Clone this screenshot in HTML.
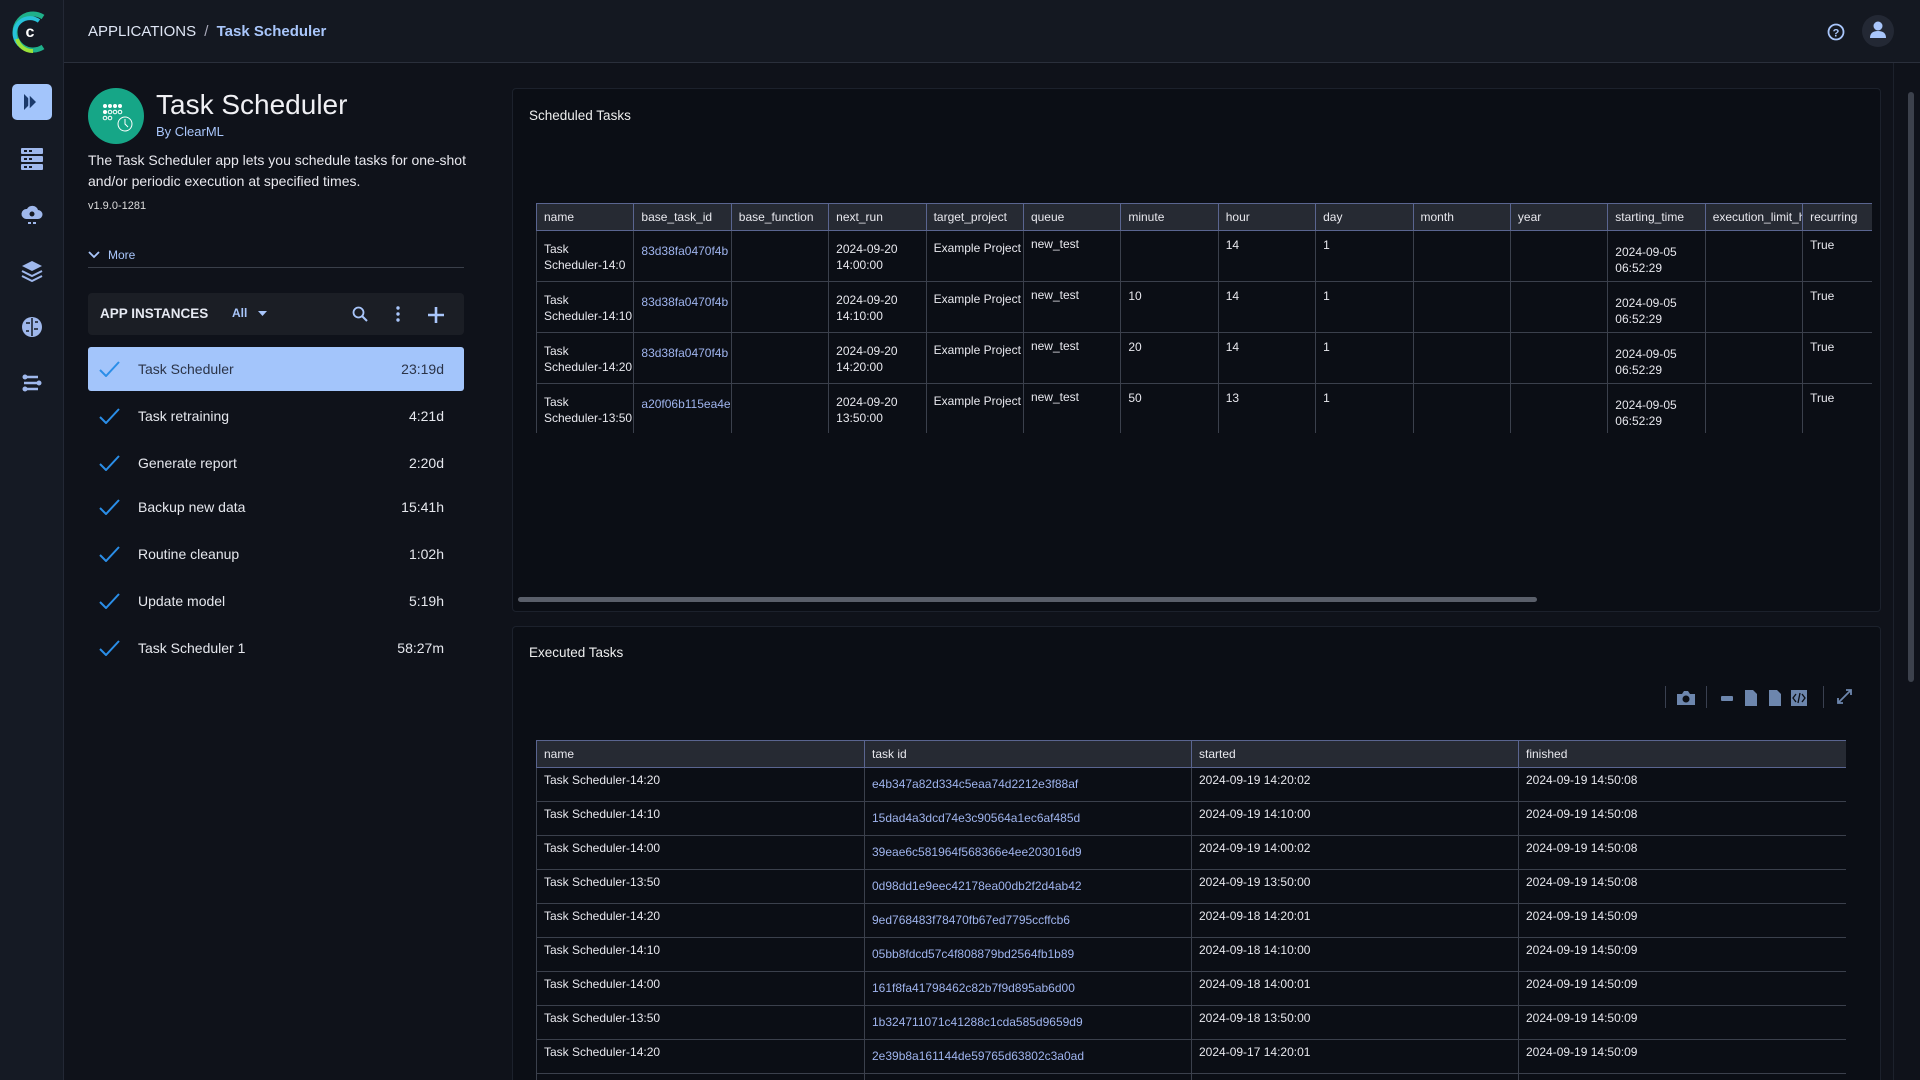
<!DOCTYPE html>
<html style="width:1920px;height:1080px;overflow:hidden"><head><meta charset="utf-8"><style>
*{box-sizing:border-box;margin:0;padding:0}
body{width:1920px;height:1080px;overflow:hidden;background:#0f121a;font-family:"Liberation Sans",sans-serif;color:#e6e8ee;position:relative}
.abs{position:absolute}
#side{left:0;top:0;width:64px;height:1080px;background:#151a24;border-right:1px solid #232835}
#head{left:64px;top:0;width:1856px;height:63px;background:#141821;border-bottom:1px solid #2a2f3b}
.card{background:#0b0e15;border:1px solid #1c212c;border-radius:4px}
table{border-collapse:collapse;font-family:"Liberation Sans Narrow","Liberation Sans",sans-serif;font-size:12px;color:#e8e8ee;table-layout:fixed}
td,th{border:1px solid #3b404c;text-align:left;vertical-align:top;padding:5px 7px;font-weight:normal;overflow:hidden;white-space:nowrap}
th{background:#262a33;border-color:#5a6590;height:27px;padding-top:6px}
.lk{color:#9fb4ee}
.item{left:88px;width:376px;height:44px;font-size:14px}
.item .n{position:absolute;left:50px;top:14px}
.item .t{position:absolute;right:20px;top:14px}
.item svg{position:absolute;left:11px;top:14px}
</style></head><body>
<div id="side" class="abs">
<svg class="abs" style="left:9px;top:9px" width="42" height="46" viewBox="0 0 42 46"><path d="M34 8 A18 18 0 1 0 34 38" fill="none" stroke="#1fb08a" stroke-width="5"/><path d="M30 12 A14 14 0 0 0 12 37" fill="none" stroke="#27c2d9" stroke-width="4"/><path d="M8 30 A16 16 0 0 0 24 42" fill="none" stroke="#9be33a" stroke-width="4"/><text x="21" y="28" fill="#fff" font-size="16" font-weight="bold" font-family="Liberation Sans" text-anchor="middle">c</text></svg>
<div class="abs" style="left:12px;top:84px;width:40px;height:36px;background:#a3c5fb;border-radius:5px"></div>
<svg class="abs" style="left:22px;top:92px" width="20" height="20" viewBox="0 0 20 20"><path d="M2 2 L10 10 L2 18Z" fill="#1b3a6a"/><path d="M7 2 L15 10 L7 18Z" fill="#1b3a6a" stroke="#a3c5fb" stroke-width="1.5"/></svg>
<svg class="abs" style="left:21px;top:148px" width="22" height="22"><g fill="#9fb8ec"><rect x="0" y="0" width="22" height="6" rx="1"/><rect x="0" y="8" width="22" height="6" rx="1"/><rect x="0" y="16" width="22" height="6" rx="1"/></g><g fill="#151a24"><rect x="3" y="2" width="3" height="2"/><rect x="8" y="2" width="3" height="2"/><rect x="3" y="10" width="3" height="2"/><rect x="8" y="10" width="3" height="2"/><rect x="3" y="18" width="3" height="2"/><rect x="8" y="18" width="3" height="2"/></g></svg>
<svg class="abs" style="left:21px;top:204px" width="22" height="22"><path d="M5 15 A5 5 0 0 1 6 5 A6 6 0 0 1 17 6 A4.5 4.5 0 0 1 17 15Z" fill="#9fb8ec"/><circle cx="11" cy="10" r="2.5" fill="#151a24"/><path d="M7 19h3M12 19h3" stroke="#9fb8ec" stroke-width="2"/></svg>
<svg class="abs" style="left:21px;top:260px" width="22" height="22"><path d="M11 1 L21 6 L11 11 L1 6Z" fill="#9fb8ec"/><path d="M1 11 L11 16 L21 11 M1 16 L11 21 L21 16" fill="none" stroke="#9fb8ec" stroke-width="2"/></svg>
<svg class="abs" style="left:21px;top:316px" width="22" height="22"><circle cx="11" cy="11" r="10" fill="#9fb8ec"/><path d="M11 2v18M5 7h4M13 13h4M5 15h3M14 6h3" stroke="#151a24" stroke-width="1.5"/></svg>
<svg class="abs" style="left:21px;top:372px" width="22" height="22"><path d="M3 5h14M3 11h16M3 17h14" stroke="#9fb8ec" stroke-width="2.5" fill="none"/><circle cx="4" cy="5" r="2.5" fill="#9fb8ec"/><circle cx="18" cy="11" r="2.5" fill="#9fb8ec"/><circle cx="4" cy="17" r="2.5" fill="#9fb8ec"/></svg>
</div>
<div id="head" class="abs">
<div class="abs" style="left:24px;top:23px;font-size:15px;color:#dfe6f5">APPLICATIONS <span style="color:#aab;margin:0 4px">/</span> <span style="color:#a9c6fb;font-weight:bold">Task Scheduler</span></div>
<svg class="abs" style="left:1763px;top:23px" width="18" height="18"><circle cx="9" cy="9" r="7.5" fill="none" stroke="#a9c6fb" stroke-width="1.8"/><text x="9" y="13.5" font-size="11" font-weight="bold" fill="#a9c6fb" text-anchor="middle" font-family="Liberation Sans">?</text></svg>
<div class="abs" style="left:1798px;top:15px;width:32px;height:32px;border-radius:50%;background:#232834"></div>
<svg class="abs" style="left:1804px;top:20px" width="20" height="20"><circle cx="10" cy="6" r="4.5" fill="#a9c6fb"/><path d="M2 18 Q2 11 10 11 Q18 11 18 18Z" fill="#a9c6fb"/></svg>
</div>
<div class="abs" style="left:88px;top:88px;width:56px;height:56px;border-radius:50%;background:#16a687"></div>
<svg class="abs" style="left:100px;top:100px" width="36" height="36"><g fill="#fff"><circle cx="5" cy="6" r="2"/><circle cx="10" cy="6" r="2"/><circle cx="15" cy="6" r="2"/><circle cx="20" cy="6" r="2"/><circle cx="5" cy="12" r="2"/></g><g fill="none" stroke="#fff" stroke-width="1"><circle cx="10" cy="12" r="1.8"/><circle cx="15" cy="12" r="1.8"/><circle cx="20" cy="12" r="1.8"/><circle cx="5" cy="18" r="1.8"/><circle cx="10" cy="18" r="1.8"/><circle cx="25" cy="24" r="7"/><path d="M25 19v5l3 3"/></g></svg>
<div class="abs" style="left:156px;top:89px;font-size:28px;color:#f0f0f4">Task Scheduler</div>
<div class="abs" style="left:156px;top:124px;font-size:13px;color:#a9c6fb">By ClearML</div>
<div class="abs" style="left:88px;top:150px;font-size:14px;line-height:21px;color:#e8e8ee;width:390px">The Task Scheduler app lets you schedule tasks for one-shot and/or periodic execution at specified times.</div>
<div class="abs" style="left:88px;top:200px;font-size:11px;color:#ddd">v1.9.0-1281</div>
<svg class="abs" style="left:88px;top:250px" width="12" height="10"><path d="M1 2l5 5 5-5" stroke="#a9c6fb" stroke-width="1.8" fill="none"/></svg>
<div class="abs" style="left:108px;top:248px;font-size:12px;color:#a9c6fb">More</div>
<div class="abs" style="left:88px;top:267px;width:376px;height:1px;background:#3a3f4a"></div>
<div class="abs" style="left:88px;top:293px;width:376px;height:42px;background:#1b1e25;border-radius:4px"></div>
<div class="abs" style="left:100px;top:306px;font-size:13.5px;font-weight:bold;color:#e6e9f2">APP INSTANCES</div>
<div class="abs" style="left:232px;top:306px;font-size:12px;font-weight:bold;color:#a9c6fb">All</div>
<svg class="abs" style="left:258px;top:311px" width="9" height="5"><path d="M0 0h9L4.5 5Z" fill="#a9c6fb"/></svg>
<svg class="abs" style="left:352px;top:306px" width="16" height="16"><circle cx="6.5" cy="6.5" r="5" fill="none" stroke="#a9c6fb" stroke-width="1.8"/><path d="M10 10l5 5" stroke="#a9c6fb" stroke-width="2"/></svg>
<svg class="abs" style="left:396px;top:306px" width="4" height="16"><g fill="#a9c6fb"><circle cx="2" cy="2" r="1.7"/><circle cx="2" cy="8" r="1.7"/><circle cx="2" cy="14" r="1.7"/></g></svg>
<svg class="abs" style="left:428px;top:307px" width="16" height="16"><path d="M8 0v16M0 8h16" stroke="#a9c6fb" stroke-width="2.6"/></svg>
<div class="abs item" style="top:347px;background:#a3c5fb;border-radius:3px;color:#2b3448"><svg width="22" height="16"><path d="M1 9l6 6 L20 1" stroke="#2a8ee8" stroke-width="2" fill="none"/></svg><span class="n">Task Scheduler</span><span class="t">23:19d</span></div>
<div class="abs item" style="top:394px"><svg width="22" height="16"><path d="M1 9l6 6 L20 1" stroke="#2a8ee8" stroke-width="2" fill="none"/></svg><span class="n">Task retraining</span><span class="t">4:21d</span></div>
<div class="abs item" style="top:441px"><svg width="22" height="16"><path d="M1 9l6 6 L20 1" stroke="#2a8ee8" stroke-width="2" fill="none"/></svg><span class="n">Generate report</span><span class="t">2:20d</span></div>
<div class="abs item" style="top:485px"><svg width="22" height="16"><path d="M1 9l6 6 L20 1" stroke="#2a8ee8" stroke-width="2" fill="none"/></svg><span class="n">Backup new data</span><span class="t">15:41h</span></div>
<div class="abs item" style="top:532px"><svg width="22" height="16"><path d="M1 9l6 6 L20 1" stroke="#2a8ee8" stroke-width="2" fill="none"/></svg><span class="n">Routine cleanup</span><span class="t">1:02h</span></div>
<div class="abs item" style="top:579px"><svg width="22" height="16"><path d="M1 9l6 6 L20 1" stroke="#2a8ee8" stroke-width="2" fill="none"/></svg><span class="n">Update model</span><span class="t">5:19h</span></div>
<div class="abs item" style="top:626px"><svg width="22" height="16"><path d="M1 9l6 6 L20 1" stroke="#2a8ee8" stroke-width="2" fill="none"/></svg><span class="n">Task Scheduler 1</span><span class="t">58:27m</span></div>
<div class="abs card" style="left:512px;top:88px;width:1369px;height:524px"></div>
<div class="abs" style="left:529px;top:108px;font-size:13.5px;color:#eee">Scheduled Tasks</div>
<div class="abs" style="left:536px;top:203px;width:1336px;height:230px;overflow:hidden">
<table style="width:1390px">
<colgroup><col span="14" style="width:97.4px"><col style="width:26px"></colgroup>
<tr><th>name</th><th>base_task_id</th><th>base_function</th><th>next_run</th><th>target_project</th><th>queue</th><th>minute</th><th>hour</th><th>day</th><th>month</th><th>year</th><th>starting_time</th><th>execution_limit_hours</th><th>recurring</th><th></th></tr>
<tr style="height:50px"><td style="padding-top:10px;line-height:16px">Task<br>Scheduler-14:0</td><td class="lk" style="padding-top:13px">83d38fa0470f4b</td><td></td><td style="padding-top:10px;line-height:16px">2024-09-20<br>14:00:00</td><td style="padding-top:10px">Example Project</td><td style="padding-top:6px">new_test</td><td></td><td style="padding-top:7px">14</td><td style="padding-top:7px">1</td><td></td><td></td><td style="padding-top:13px;line-height:16px">2024-09-05<br>06:52:29</td><td></td><td style="padding-top:7px">True</td><td></td></tr>
<tr style="height:50px"><td style="padding-top:10px;line-height:16px">Task<br>Scheduler-14:10</td><td class="lk" style="padding-top:13px">83d38fa0470f4b</td><td></td><td style="padding-top:10px;line-height:16px">2024-09-20<br>14:10:00</td><td style="padding-top:10px">Example Project</td><td style="padding-top:6px">new_test</td><td style="padding-top:7px">10</td><td style="padding-top:7px">14</td><td style="padding-top:7px">1</td><td></td><td></td><td style="padding-top:13px;line-height:16px">2024-09-05<br>06:52:29</td><td></td><td style="padding-top:7px">True</td><td></td></tr>
<tr style="height:50px"><td style="padding-top:10px;line-height:16px">Task<br>Scheduler-14:20</td><td class="lk" style="padding-top:13px">83d38fa0470f4b</td><td></td><td style="padding-top:10px;line-height:16px">2024-09-20<br>14:20:00</td><td style="padding-top:10px">Example Project</td><td style="padding-top:6px">new_test</td><td style="padding-top:7px">20</td><td style="padding-top:7px">14</td><td style="padding-top:7px">1</td><td></td><td></td><td style="padding-top:13px;line-height:16px">2024-09-05<br>06:52:29</td><td></td><td style="padding-top:7px">True</td><td></td></tr>
<tr style="height:50px"><td style="padding-top:10px;line-height:16px">Task<br>Scheduler-13:50</td><td class="lk" style="padding-top:13px">a20f06b115ea4e</td><td></td><td style="padding-top:10px;line-height:16px">2024-09-20<br>13:50:00</td><td style="padding-top:10px">Example Project</td><td style="padding-top:6px">new_test</td><td style="padding-top:7px">50</td><td style="padding-top:7px">13</td><td style="padding-top:7px">1</td><td></td><td></td><td style="padding-top:13px;line-height:16px">2024-09-05<br>06:52:29</td><td></td><td style="padding-top:7px">True</td><td></td></tr>
</table></div>
<div class="abs" style="left:518px;top:597px;width:1019px;height:5px;border-radius:3px;background:#5a5f6a"></div>
<div class="abs card" style="left:512px;top:626px;width:1369px;height:454px;border-bottom:none;border-radius:4px 4px 0 0"></div>
<div class="abs" style="left:529px;top:645px;font-size:13.5px;color:#eee">Executed Tasks</div>
<div class="abs" style="left:1665px;top:686px;width:1px;height:22px;background:#3a4050"></div>
<div class="abs" style="left:1706px;top:686px;width:1px;height:22px;background:#3a4050"></div>
<div class="abs" style="left:1823px;top:686px;width:1px;height:22px;background:#3a4050"></div>
<svg class="abs" style="left:1677px;top:690px" width="18" height="15"><path d="M0 4h5l2-3h4l2 3h5v11H0Z" fill="#6d86ad"/><circle cx="9" cy="9" r="3.5" fill="#0b0e15"/></svg>
<div class="abs" style="left:1721px;top:696px;width:12px;height:5px;background:#6d86ad;border-radius:1px"></div>
<svg class="abs" style="left:1745px;top:690px" width="12" height="16"><path d="M0 0h8l4 4v12H0Z" fill="#6d86ad"/></svg>
<svg class="abs" style="left:1769px;top:690px" width="12" height="16"><path d="M0 0h8l4 4v12H0Z" fill="#6d86ad"/></svg>
<svg class="abs" style="left:1791px;top:690px" width="16" height="16"><rect width="16" height="16" fill="#6d86ad"/><path d="M5 4l-3 4 3 4M11 4l3 4-3 4M9 3l-2 10" stroke="#0b0e15" stroke-width="1.3" fill="none"/></svg>
<svg class="abs" style="left:1837px;top:689px" width="15" height="15"><path d="M1 14L14 1M9 1h5v5M1 9v5h5" stroke="#6d86ad" stroke-width="1.8" fill="none"/></svg>
<div class="abs" style="left:536px;top:740px;width:1310px;height:340px;overflow:hidden">
<table style="width:1310px">
<colgroup><col style="width:328px"><col style="width:327px"><col style="width:327px"><col style="width:328px"></colgroup>
<tr><th>name</th><th>task id</th><th>started</th><th>finished</th></tr>
<tr style="height:34px"><td>Task Scheduler-14:20</td><td class="lk" style="padding-top:9px">e4b347a82d334c5eaa74d2212e3f88af</td><td>2024-09-19 14:20:02</td><td>2024-09-19 14:50:08</td></tr>
<tr style="height:34px"><td>Task Scheduler-14:10</td><td class="lk" style="padding-top:9px">15dad4a3dcd74e3c90564a1ec6af485d</td><td>2024-09-19 14:10:00</td><td>2024-09-19 14:50:08</td></tr>
<tr style="height:34px"><td>Task Scheduler-14:00</td><td class="lk" style="padding-top:9px">39eae6c581964f568366e4ee203016d9</td><td>2024-09-19 14:00:02</td><td>2024-09-19 14:50:08</td></tr>
<tr style="height:34px"><td>Task Scheduler-13:50</td><td class="lk" style="padding-top:9px">0d98dd1e9eec42178ea00db2f2d4ab42</td><td>2024-09-19 13:50:00</td><td>2024-09-19 14:50:08</td></tr>
<tr style="height:34px"><td>Task Scheduler-14:20</td><td class="lk" style="padding-top:9px">9ed768483f78470fb67ed7795ccffcb6</td><td>2024-09-18 14:20:01</td><td>2024-09-19 14:50:09</td></tr>
<tr style="height:34px"><td>Task Scheduler-14:10</td><td class="lk" style="padding-top:9px">05bb8fdcd57c4f808879bd2564fb1b89</td><td>2024-09-18 14:10:00</td><td>2024-09-19 14:50:09</td></tr>
<tr style="height:34px"><td>Task Scheduler-14:00</td><td class="lk" style="padding-top:9px">161f8fa41798462c82b7f9d895ab6d00</td><td>2024-09-18 14:00:01</td><td>2024-09-19 14:50:09</td></tr>
<tr style="height:34px"><td>Task Scheduler-13:50</td><td class="lk" style="padding-top:9px">1b324711071c41288c1cda585d9659d9</td><td>2024-09-18 13:50:00</td><td>2024-09-19 14:50:09</td></tr>
<tr style="height:34px"><td>Task Scheduler-14:20</td><td class="lk" style="padding-top:9px">2e39b8a161144de59765d63802c3a0ad</td><td>2024-09-17 14:20:01</td><td>2024-09-19 14:50:09</td></tr>
<tr style="height:34px"><td>Task Scheduler-14:10</td><td class="lk"></td><td></td><td></td></tr>
</table></div>
<div class="abs" style="left:1893px;top:63px;width:1px;height:1017px;background:#1c212c"></div>
<div class="abs" style="left:1908px;top:92px;width:6px;height:590px;border-radius:3px;background:#3c414c"></div>
</body></html>
